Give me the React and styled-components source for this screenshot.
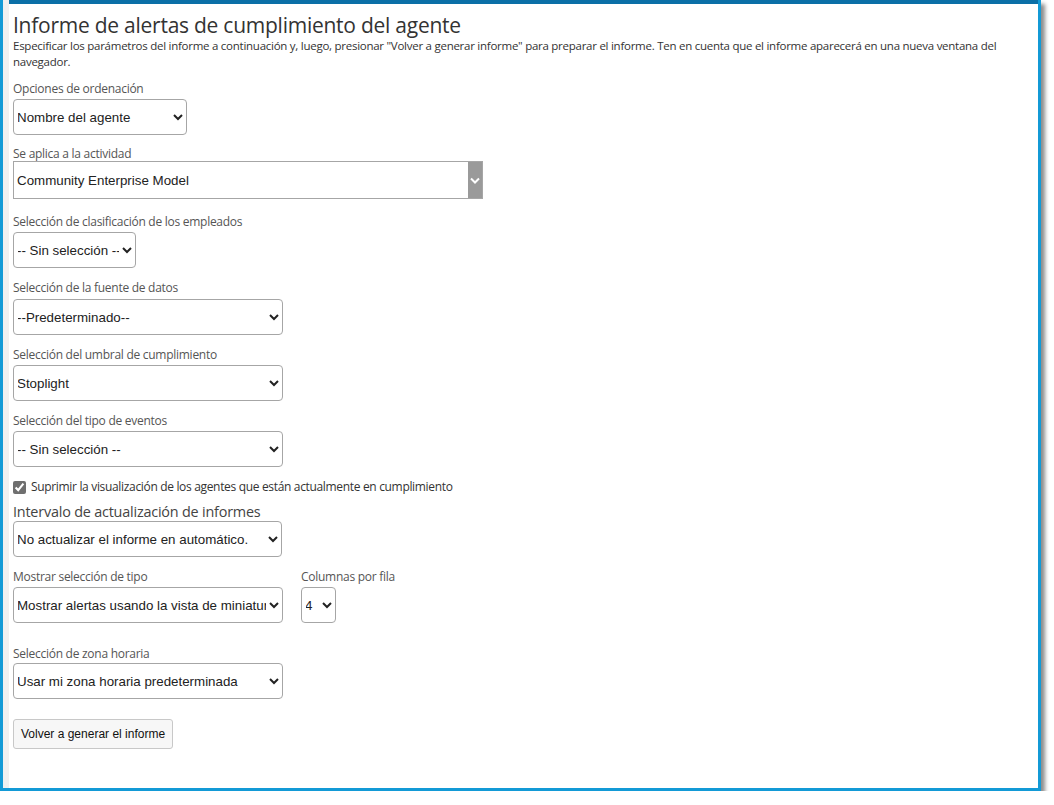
import React from "react";
import styled, { createGlobalStyle } from "styled-components";

const Global = createGlobalStyle`
  html, body { margin: 0; padding: 0; background: #ffffff; }
  body { font-family: "Open Sans", "Noto Sans", sans-serif; }
`;

const Frame = styled.div`
  width: 1035px;
  height: 788px;
  display: flex;
  border-left: 3px solid #139ad6;
  border-right: 3px solid #139ad6;
  border-bottom: 3px solid #139ad6;
  box-shadow: 4px 4px 4px rgba(0, 0, 0, 0.45);
  background: #ffffff;
`;

const Gutter = styled.div`
  width: 6px;
  flex: 0 0 6px;
  background: #f0f0f0;
`;

const Content = styled.main`
  flex: 1;
  border-top: 4px solid #0b6fa7;
  padding: 0 8px 0 4px;
  color: #333;
`;

const Title = styled.h1`
  margin: 8px 0 0;
  font-family: "Open Sans", sans-serif;
  font-weight: 400;
  font-size: 21px;
  line-height: 26px;
  letter-spacing: -0.25px;
  color: #333;
`;

const Description = styled.p`
  margin: 0;
  font-size: 11.5px;
  line-height: 16px;
  letter-spacing: -0.26px;
  color: #333;
`;

const Field = styled.div`
  display: flex;
  flex-direction: column;
  align-items: flex-start;
  margin-top: ${(p) => p.$mt}px;
`;

const Label = styled.label`
  font-size: ${(p) => (p.$big ? 14.4 : 12)}px;
  line-height: ${(p) => (p.$big ? 16 : 14)}px;
  letter-spacing: ${(p) => (p.$big ? -0.2 : -0.27)}px;
  color: ${(p) => (p.$big ? "#444" : "#555")};
  margin-bottom: ${(p) => p.$gap ?? 3}px;
`;

const Select = styled.select`
  width: ${(p) => p.$w}px;
  height: 36px;
  box-sizing: border-box;
  border: 1px solid #a6a6a6;
  border-radius: 4px;
  background: #fff;
  font-family: "Liberation Sans", Arial, sans-serif;
  font-size: 13.333px;
  color: #222;
  padding: 0;
  text-indent: -1px;
  margin: 0;
`;

const FlatSelectBox = styled.div`
  display: flex;
  width: 470px;
  height: 38px;
  box-sizing: border-box;
  border: 1px solid #a6a6a6;
  background: #fff;
`;

const FlatSelect = styled.select`
  flex: 1;
  appearance: none;
  -webkit-appearance: none;
  border: none;
  outline: none;
  background: transparent;
  font-family: "Liberation Sans", Arial, sans-serif;
  font-size: 13.333px;
  color: #222;
  padding: 0 0 0 3px;
  margin: 0;
`;

const ArrowBlock = styled.div`
  width: 14px;
  background: #9a9a9a;
  display: flex;
  align-items: center;
  justify-content: center;
`;

const CheckRow = styled.div`
  display: flex;
  align-items: center;
  gap: 5px;
  margin-top: 13px;
  font-size: 12px;
  line-height: 14px;
  letter-spacing: -0.33px;
  color: #333;
`;

const Check = styled.input`
  width: 13px;
  height: 13px;
  margin: 0;
  accent-color: #6f6f6f;
`;

const Row = styled.div`
  display: flex;
  gap: 18px;
  margin-top: ${(p) => p.$mt}px;
`;

const Button = styled.button`
  margin-top: 20px;
  height: 30px;
  padding: 0 7px;
  box-sizing: border-box;
  border: 1px solid #c8c8c8;
  border-radius: 3px;
  background: #f7f7f7;
  font-family: "Liberation Sans", Arial, sans-serif;
  font-size: 12px;
  color: #111;
`;

export default function App() {
  return (
    <>
      <Global />
      <Frame>
        <Gutter />
        <Content>
          <Title>Informe de alertas de cumplimiento del agente</Title>
          <Description>
            Especificar los parámetros del informe a continuación y, luego, presionar "Volver a generar informe" para preparar el informe. Ten en cuenta que el informe aparecerá en una nueva ventana del navegador.
          </Description>

          <Field $mt={12}>
            <Label>Opciones de ordenación</Label>
            <Select $w={174} defaultValue="a">
              <option value="a">Nombre del agente</option>
            </Select>
          </Field>

          <Field $mt={12}>
            <Label $gap={0}>Se aplica a la actividad</Label>
            <FlatSelectBox>
              <FlatSelect defaultValue="c">
                <option value="c">Community Enterprise Model</option>
              </FlatSelect>
              <ArrowBlock>
                <svg width="10" height="7" viewBox="0 0 10 7">
                  <path d="M1 1.5 L5 5.5 L9 1.5" fill="none" stroke="#fff" strokeWidth="2" />
                </svg>
              </ArrowBlock>
            </FlatSelectBox>
          </Field>

          <Field $mt={16}>
            <Label>Selección de clasificación de los empleados</Label>
            <Select $w={123} defaultValue="n">
              <option value="n">-- Sin selección --</option>
            </Select>
          </Field>

          <Field $mt={13}>
            <Label $gap={4}>Selección de la fuente de datos</Label>
            <Select $w={270} defaultValue="p">
              <option value="p">--Predeterminado--</option>
            </Select>
          </Field>

          <Field $mt={13}>
            <Label>Selección del umbral de cumplimiento</Label>
            <Select $w={270} defaultValue="s">
              <option value="s">Stoplight</option>
            </Select>
          </Field>

          <Field $mt={13}>
            <Label>Selección del tipo de eventos</Label>
            <Select $w={270} defaultValue="n">
              <option value="n">-- Sin selección --</option>
            </Select>
          </Field>

          <CheckRow>
            <Check type="checkbox" defaultChecked id="sup" />
            <label htmlFor="sup">Suprimir la visualización de los agentes que están actualmente en cumplimiento</label>
          </CheckRow>

          <Field $mt={10}>
            <Label $big $gap={1}>Intervalo de actualización de informes</Label>
            <Select $w={269} defaultValue="n">
              <option value="n">No actualizar el informe en automático.</option>
            </Select>
          </Field>

          <Row $mt={13}>
            <Field $mt={0}>
              <Label>Mostrar selección de tipo</Label>
              <Select $w={270} defaultValue="m">
                <option value="m">Mostrar alertas usando la vista de miniaturas</option>
              </Select>
            </Field>
            <Field $mt={0}>
              <Label>Columnas por fila</Label>
              <Select $w={35} defaultValue="4">
                <option value="4">4</option>
              </Select>
            </Field>
          </Row>

          <Field $mt={24}>
            <Label $gap={2}>Selección de zona horaria</Label>
            <Select $w={270} defaultValue="u">
              <option value="u">Usar mi zona horaria predeterminada</option>
            </Select>
          </Field>

          <Button type="button">Volver a generar el informe</Button>
        </Content>
      </Frame>
    </>
  );
}
